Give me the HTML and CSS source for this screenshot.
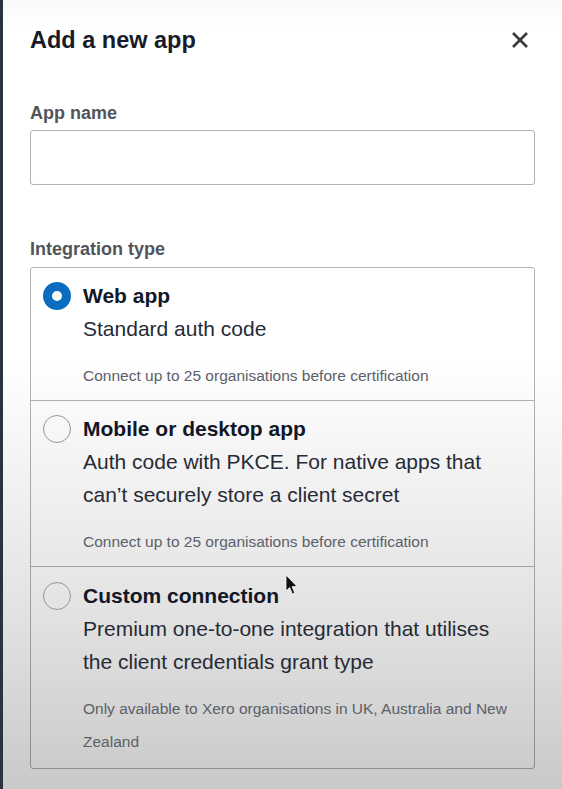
FILE: index.html
```html
<!DOCTYPE html>
<html lang="en">
<head>
<meta charset="utf-8">
<title>Add a new app</title>
<link rel="stylesheet" href="styles.css">
</head>
<body>
<div class="page">
  <div class="strip"></div>
  <div class="modal">
    <header class="modal-head">
      <h1 class="modal-title">Add a new app</h1>
      <button class="close" aria-label="Close">
        <svg width="18" height="18" viewBox="0 0 18 18"><path d="M2 2 L16 16 M16 2 L2 16" stroke="#383838" stroke-width="2.6" stroke-linecap="butt" fill="none"/></svg>
      </button>
    </header>

    <label class="field-label" for="app-name">App name</label>
    <input class="text-input" id="app-name" type="text">

    <div class="field-label field-label--gap">Integration type</div>
    <div class="options">
      <label class="option">
        <span class="radio radio--checked"></span>
        <span class="option-body">
          <span class="opt-title">Web app</span>
          <span class="opt-desc">Standard auth code</span>
          <span class="opt-note">Connect up to 25 organisations before certification</span>
        </span>
      </label>
      <label class="option">
        <span class="radio"></span>
        <span class="option-body">
          <span class="opt-title">Mobile or desktop app</span>
          <span class="opt-desc">Auth code with PKCE. For native apps that can’t securely store a client secret</span>
          <span class="opt-note">Connect up to 25 organisations before certification</span>
        </span>
      </label>
      <label class="option option--last">
        <span class="radio"></span>
        <span class="option-body">
          <span class="opt-title">Custom connection</span>
          <span class="opt-desc">Premium one-to-one integration that utilises the client credentials grant type</span>
          <span class="opt-note">Only available to Xero organisations in UK, Australia and New Zealand</span>
        </span>
      </label>
    </div>
  </div>
  <svg class="cursor" width="14" height="22" viewBox="0 0 14 22"><path d="M1 1 L1 17 L4.6 13.6 L7.4 20 L9.8 19 L7.1 12.7 L12 12.4 Z" fill="#111" stroke="#fff" stroke-width="0.8"/></svg>
</div>
</body>
</html>
```

FILE: styles.css
```css
* { box-sizing: border-box; }

html, body {
  margin: 0;
  padding: 0;
  height: 100%;
}

body {
  font-family: "Liberation Sans", Arial, sans-serif;
  background: linear-gradient(to bottom, #f9f9f9 0px, #ffffff 30px, #ffffff 360px, #e4e4e4 600px, #c9c9c9 789px);
  overflow: hidden;
}

.page {
  position: relative;
  display: flex;
  min-height: 789px;
}

.strip {
  width: 3px;
  flex: none;
  background: #2c3340;
}

.modal {
  flex: 1;
  padding: 26px 27px 0 27px;
}

.modal-head {
  display: flex;
  justify-content: space-between;
  align-items: center;
}

.modal-title {
  margin: 0;
  font-size: 23.5px;
  line-height: 28px;
  font-weight: 700;
  color: #171c2a;
}

.close {
  border: 0;
  background: none;
  padding: 0;
  margin-right: 6px;
  width: 18px;
  height: 18px;
  display: flex;
  cursor: pointer;
}

.field-label {
  display: block;
  margin-top: 48px;
  font-size: 18px;
  line-height: 22px;
  font-weight: 700;
  color: #50545b;
}

.field-label--gap {
  margin-top: 53px;
}

.text-input {
  display: block;
  width: 100%;
  height: 55px;
  margin-top: 6px;
  border: 1px solid rgba(0, 0, 0, 0.3);
  border-radius: 3px;
  background: transparent;
  font: inherit;
}

.options {
  margin-top: 7px;
  border: 1px solid rgba(0, 0, 0, 0.3);
  border-radius: 3px;
}

.option {
  display: flex;
  align-items: flex-start;
  padding: 11px 16px 8px 12px;
  border-top: 1px solid rgba(0, 0, 0, 0.3);
}

.option:first-child {
  border-top: 0;
}

.option--last {
  padding-top: 12px;
  padding-bottom: 10px;
}

.radio {
  flex: none;
  width: 28px;
  height: 28px;
  margin-top: 2.5px;
  margin-right: 12px;
  border-radius: 50%;
  border: 1.5px solid #959595;
  background: transparent;
}

.radio--checked {
  border: 9px solid #0a6dc0;
  background: #ffffff;
}

.option-body {
  display: flex;
  flex-direction: column;
}

.opt-title {
  font-size: 21px;
  line-height: 33px;
  font-weight: 700;
  color: #121726;
}

.opt-desc {
  font-size: 21px;
  line-height: 33px;
  color: #262b36;
}

.opt-note {
  margin-top: 14px;
  font-size: 15.5px;
  line-height: 33px;
  color: #5c6068;
}

.cursor {
  position: absolute;
  left: 285px;
  top: 574px;
}
```
